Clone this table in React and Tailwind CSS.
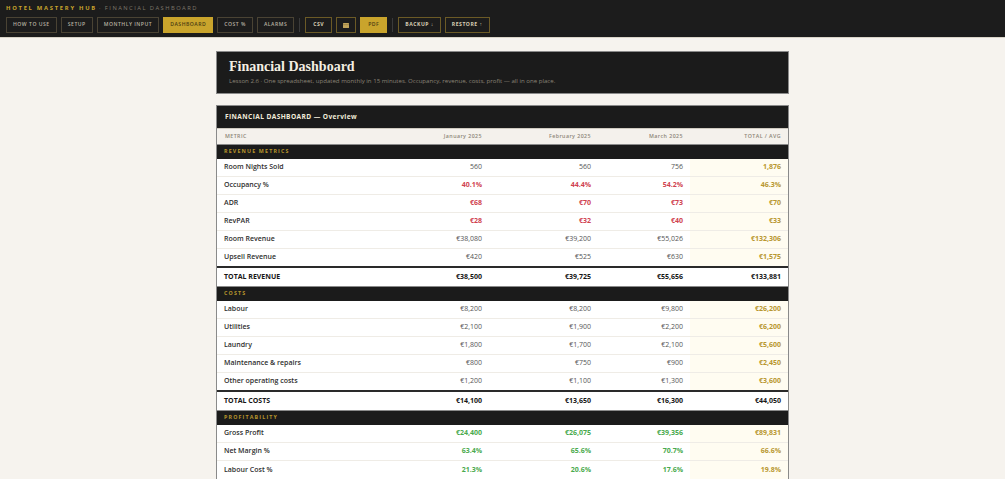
import React from "react";

const navA = ["HOW TO USE", "SETUP", "MONTHLY INPUT", "DASHBOARD", "COST %", "ALARMS"];

function Btn({ children, active, strong, cls = "" }) {
  const base =
    "h-[16px] flex items-center justify-center px-[6px] text-[5.1px] tracking-[0.1em] border " + cls;
  if (active)
    return (
      <div className={base + " bg-[#c9a42c] border-[#c9a42c] text-[#4a3c12] font-semibold"}>{children}</div>
    );
  if (strong)
    return (
      <div className={base + " border-[#6b5a26] text-[#d8cfb4] font-bold"}>{children}</div>
    );
  return <div className={base + " border-[#4a4334] text-[#b9b2a2] font-semibold"}>{children}</div>;
}

const sections = [
  {
    title: "REVENUE METRICS",
    rows: [
      ["Room Nights Sold", ["560", "560", "756"], "1,876", "n"],
      ["Occupancy %", ["40.1%", "44.4%", "54.2%"], "46.3%", "r"],
      ["ADR", ["€68", "€70", "€73"], "€70", "r"],
      ["RevPAR", ["€28", "€32", "€40"], "€33", "r"],
      ["Room Revenue", ["€38,080", "€39,200", "€55,026"], "€132,306", "n"],
      ["Upsell Revenue", ["€420", "€525", "€630"], "€1,575", "n"],
    ],
    total: ["TOTAL REVENUE", ["€38,500", "€39,725", "€55,656"], "€133,881"],
  },
  {
    title: "COSTS",
    rows: [
      ["Labour", ["€8,200", "€8,200", "€9,800"], "€26,200", "n"],
      ["Utilities", ["€2,100", "€1,900", "€2,200"], "€6,200", "n"],
      ["Laundry", ["€1,800", "€1,700", "€2,100"], "€5,600", "n"],
      ["Maintenance & repairs", ["€800", "€750", "€900"], "€2,450", "n"],
      ["Other operating costs", ["€1,200", "€1,100", "€1,300"], "€3,600", "n"],
    ],
    total: ["TOTAL COSTS", ["€14,100", "€13,650", "€16,300"], "€44,050"],
  },
  {
    title: "PROFITABILITY",
    rows: [
      ["Gross Profit", ["€24,400", "€26,075", "€39,356"], "€89,831", "g"],
      ["Net Margin %", ["63.4%", "65.6%", "70.7%"], "66.6%", "g"],
      ["Labour Cost %", ["21.3%", "20.6%", "17.6%"], "19.8%", "g"],
    ],
  },
];

const valCls = {
  n: "text-[#555555]",
  r: "text-[#d0434f] font-bold",
  g: "text-[#4aaa4e] font-bold",
};

export default function App() {
  return (
    <div
      className="min-h-screen bg-[#f6f3ee]"
      style={{ fontFamily: '"Open Sans", "Noto Sans", sans-serif' }}
    >
      <div className="bg-[#1c1c1c] h-[38px] pl-[6px] pt-[5px] border-b border-[#d9d4c8]">
        <div className="h-[8px] flex items-center text-[5.8px] leading-none">
          <span className="text-[#c9a42c] font-bold tracking-[0.3em]">HOTEL MASTERY HUB</span>
          <span className="text-[#7d776a] ml-[2px] tracking-[0.25em]">· FINANCIAL DASHBOARD</span>
        </div>
        <div className="mt-[4px] flex items-center gap-[4px]">
          {navA.map((n) => (
            <Btn key={n} active={n === "DASHBOARD"}>
              {n}
            </Btn>
          ))}
          <div className="w-px h-[14px] bg-[#3a3a3a] mx-[1px]" />
          <Btn strong cls="px-[7px]">CSV</Btn>
          <Btn strong cls="w-[20px]">
            <svg width="6" height="5" viewBox="0 0 6 5">
              <rect x="0" y="0" width="6" height="5" rx="0.5" fill="#c2a55a" />
              <rect x="0" y="1.5" width="6" height="0.6" fill="#8a7440" />
            </svg>
          </Btn>
          <Btn active cls="px-[7px]">PDF</Btn>
          <div className="w-px h-[14px] bg-[#3a3a3a] mx-[1px]" />
          <Btn strong>BACKUP ↓</Btn>
          <Btn strong>RESTORE ↑</Btn>
        </div>
      </div>

      <div className="w-[573px] mx-auto pt-[13px]">
        <div className="bg-[#1b1b1b] border border-[#8a8a8a] h-[43px] pl-[12px] flex flex-col justify-center">
          <div
            className="text-[14px] font-bold text-[#f4efe2] leading-none"
            style={{ fontFamily: '"Liberation Serif", "DejaVu Serif", serif' }}
          >
            Financial Dashboard
          </div>
          <div className="text-[6.1px] text-[#8a8376] mt-[4px] leading-none">
            Lesson 2.6 · One spreadsheet, updated monthly in 15 minutes. Occupancy, revenue, costs, profit — all in one place.
          </div>
        </div>

        <div className="mt-[11px] border border-[#8a8a8a] bg-white">
          <div className="bg-[#1b1b1b] h-[22px] flex items-center pl-[8px] text-[6.6px] font-bold tracking-[0.06em] text-[#f1ebda]">
            FINANCIAL DASHBOARD — Overview
          </div>
          <table className="w-full table-fixed border-collapse">
            <colgroup>
              <col className="w-[166px]" />
              <col className="w-[106px]" />
              <col className="w-[109px]" />
              <col className="w-[92px]" />
              <col className="w-[98px]" />
            </colgroup>
            <thead>
              <tr className="h-[16px] bg-[#f4f1ec] border-t border-[#cfcac0] text-[5.3px] tracking-[0.08em] text-[#8d8678] font-semibold">
                <th className="text-left pl-[8px] font-semibold">METRIC</th>
                <th className="text-right pr-[7px] font-semibold">January 2025</th>
                <th className="text-right pr-[7px] font-semibold">February 2025</th>
                <th className="text-right pr-[7px] font-semibold">March 2025</th>
                <th className="text-right pr-[7px] font-semibold">TOTAL / AVG</th>
              </tr>
            </thead>
            <tbody>
              {sections.map((s) => (
                <React.Fragment key={s.title}>
                  <tr className="h-[14px] bg-[#1b1b1b] border-t border-[#8a8a8a]">
                    <td
                      colSpan={5}
                      className="pl-[7px] text-[5.3px] font-bold tracking-[0.22em] text-[#b8952c]"
                    >
                      {s.title}
                    </td>
                  </tr>
                  {s.rows.map((r, i) => (
                    <tr
                      key={r[0]}
                      className={
                        "h-[18px] text-[7px] " + (i > 0 ? "border-t border-[#efece6]" : "")
                      }
                    >
                      <td className="pl-[7px] font-semibold text-[#2e2e2e]">{r[0]}</td>
                      {r[1].map((v, j) => (
                        <td key={j} className={"text-right pr-[7px] " + valCls[r[3]]}>
                          {v}
                        </td>
                      ))}
                      <td className="text-right pr-[7px] bg-[#fffcf1] font-bold text-[#b8972f]">
                        {r[2]}
                      </td>
                    </tr>
                  ))}
                  {s.total && (
                    <tr className="h-[20px] text-[7px] border-t-2 border-[#2a2a2a] font-bold text-[#161616]">
                      <td className="pl-[7px]">{s.total[0]}</td>
                      {s.total[1].map((v, j) => (
                        <td key={j} className="text-right pr-[7px]">
                          {v}
                        </td>
                      ))}
                      <td className="text-right pr-[7px]">{s.total[2]}</td>
                    </tr>
                  )}
                </React.Fragment>
              ))}
            </tbody>
          </table>
        </div>
      </div>
    </div>
  );
}
